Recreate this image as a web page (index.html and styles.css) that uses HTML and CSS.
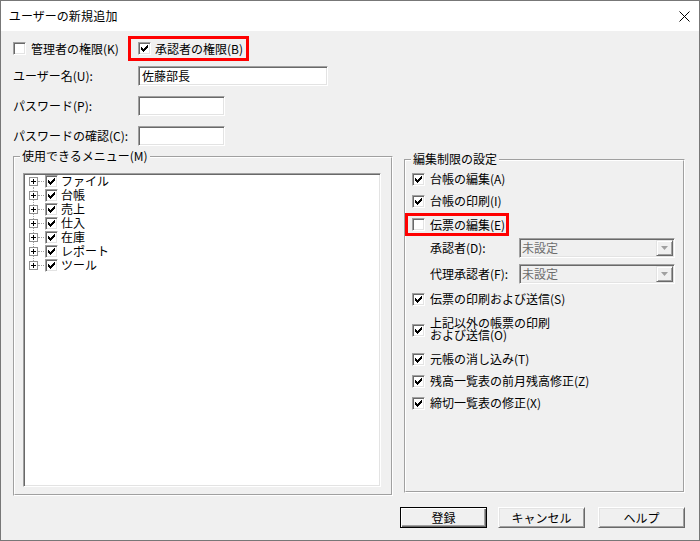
FILE: index.html
```html
<!DOCTYPE html>
<html lang="ja">
<head>
<meta charset="utf-8">
<title>ユーザーの新規追加</title>
<link rel="stylesheet" href="styles.css">
</head>
<body>
<div class="window">
  <div class="titlebar">
    <span class="title">ユーザーの新規追加</span>
    <svg class="close" width="11" height="11" viewBox="0 0 11 11"><path d="M0.5 0.5L10.5 10.5M10.5 0.5L0.5 10.5" stroke="#000" stroke-width="1" fill="none"/></svg>
  </div>
  <div class="client">
    <div class="top-row">
      <div class="chk admin"><span class="cb"></span><span>管理者の権限(K)</span></div>
      <div class="chk hl approver"><span class="cb"><svg class="ck" width="7" height="7" viewBox="0 0 7 7"><path d="M6 0h1v1h-1z M5 1h2v1h-2z M0 2h1v1h-1z M4 2h3v1h-3z M0 3h2v1h-2z M3 3h3v1h-3z M0 4h5v1h-5z M1 5h3v1h-3z M2 6h1v1h-1z"/></svg></span><span>承認者の権限(B)</span></div>
    </div>

    <div class="form">
      <span class="lbl">ユーザー名(U):</span><div class="edit wide">佐藤部長</div>
      <span class="lbl">パスワード(P):</span><div class="edit short"></div>
      <span class="lbl">パスワードの確認(C):</span><div class="edit short"></div>
    </div>

    <div class="groups">
      <div class="group menu-group">
        <div class="gi">
          <div class="listbox">
            <div class="tree-row first"><span class="rail"><svg class="exp" width="9" height="9" viewBox="0 0 9 9"><path d="M2 4h5v1h-5z M4 2h1v5h-1z"/></svg></span><span class="hline"></span><span class="cb tcb"><svg class="ck" width="7" height="7" viewBox="0 0 7 7"><path d="M6 0h1v1h-1z M5 1h2v1h-2z M0 2h1v1h-1z M4 2h3v1h-3z M0 3h2v1h-2z M3 3h3v1h-3z M0 4h5v1h-5z M1 5h3v1h-3z M2 6h1v1h-1z"/></svg></span><span class="ttext">ファイル</span></div>
            <div class="tree-row"><span class="rail"><svg class="exp" width="9" height="9" viewBox="0 0 9 9"><path d="M2 4h5v1h-5z M4 2h1v5h-1z"/></svg></span><span class="hline"></span><span class="cb tcb"><svg class="ck" width="7" height="7" viewBox="0 0 7 7"><path d="M6 0h1v1h-1z M5 1h2v1h-2z M0 2h1v1h-1z M4 2h3v1h-3z M0 3h2v1h-2z M3 3h3v1h-3z M0 4h5v1h-5z M1 5h3v1h-3z M2 6h1v1h-1z"/></svg></span><span class="ttext">台帳</span></div>
            <div class="tree-row"><span class="rail"><svg class="exp" width="9" height="9" viewBox="0 0 9 9"><path d="M2 4h5v1h-5z M4 2h1v5h-1z"/></svg></span><span class="hline"></span><span class="cb tcb"><svg class="ck" width="7" height="7" viewBox="0 0 7 7"><path d="M6 0h1v1h-1z M5 1h2v1h-2z M0 2h1v1h-1z M4 2h3v1h-3z M0 3h2v1h-2z M3 3h3v1h-3z M0 4h5v1h-5z M1 5h3v1h-3z M2 6h1v1h-1z"/></svg></span><span class="ttext">売上</span></div>
            <div class="tree-row"><span class="rail"><svg class="exp" width="9" height="9" viewBox="0 0 9 9"><path d="M2 4h5v1h-5z M4 2h1v5h-1z"/></svg></span><span class="hline"></span><span class="cb tcb"><svg class="ck" width="7" height="7" viewBox="0 0 7 7"><path d="M6 0h1v1h-1z M5 1h2v1h-2z M0 2h1v1h-1z M4 2h3v1h-3z M0 3h2v1h-2z M3 3h3v1h-3z M0 4h5v1h-5z M1 5h3v1h-3z M2 6h1v1h-1z"/></svg></span><span class="ttext">仕入</span></div>
            <div class="tree-row"><span class="rail"><svg class="exp" width="9" height="9" viewBox="0 0 9 9"><path d="M2 4h5v1h-5z M4 2h1v5h-1z"/></svg></span><span class="hline"></span><span class="cb tcb"><svg class="ck" width="7" height="7" viewBox="0 0 7 7"><path d="M6 0h1v1h-1z M5 1h2v1h-2z M0 2h1v1h-1z M4 2h3v1h-3z M0 3h2v1h-2z M3 3h3v1h-3z M0 4h5v1h-5z M1 5h3v1h-3z M2 6h1v1h-1z"/></svg></span><span class="ttext">在庫</span></div>
            <div class="tree-row"><span class="rail"><svg class="exp" width="9" height="9" viewBox="0 0 9 9"><path d="M2 4h5v1h-5z M4 2h1v5h-1z"/></svg></span><span class="hline"></span><span class="cb tcb"><svg class="ck" width="7" height="7" viewBox="0 0 7 7"><path d="M6 0h1v1h-1z M5 1h2v1h-2z M0 2h1v1h-1z M4 2h3v1h-3z M0 3h2v1h-2z M3 3h3v1h-3z M0 4h5v1h-5z M1 5h3v1h-3z M2 6h1v1h-1z"/></svg></span><span class="ttext">レポート</span></div>
            <div class="tree-row last"><span class="rail"><svg class="exp" width="9" height="9" viewBox="0 0 9 9"><path d="M2 4h5v1h-5z M4 2h1v5h-1z"/></svg></span><span class="hline"></span><span class="cb tcb"><svg class="ck" width="7" height="7" viewBox="0 0 7 7"><path d="M6 0h1v1h-1z M5 1h2v1h-2z M0 2h1v1h-1z M4 2h3v1h-3z M0 3h2v1h-2z M3 3h3v1h-3z M0 4h5v1h-5z M1 5h3v1h-3z M2 6h1v1h-1z"/></svg></span><span class="ttext">ツール</span></div>
          </div>
        </div>
        <span class="caption">使用できるメニュー(M)</span>
      </div>

      <div class="group edit-group">
        <div class="gi">
          <div class="erow"><span class="cb"><svg class="ck" width="7" height="7" viewBox="0 0 7 7"><path d="M6 0h1v1h-1z M5 1h2v1h-2z M0 2h1v1h-1z M4 2h3v1h-3z M0 3h2v1h-2z M3 3h3v1h-3z M0 4h5v1h-5z M1 5h3v1h-3z M2 6h1v1h-1z"/></svg></span><span>台帳の編集(A)</span></div>
          <div class="erow"><span class="cb"><svg class="ck" width="7" height="7" viewBox="0 0 7 7"><path d="M6 0h1v1h-1z M5 1h2v1h-2z M0 2h1v1h-1z M4 2h3v1h-3z M0 3h2v1h-2z M3 3h3v1h-3z M0 4h5v1h-5z M1 5h3v1h-3z M2 6h1v1h-1z"/></svg></span><span>台帳の印刷(I)</span></div>
          <div class="erow hl2"><span class="cb"></span><span>伝票の編集(E)</span></div>
          <div class="crow first-combo"><span class="clbl">承認者(D):</span><div class="combo"><span class="ctext">未設定</span><span class="dd"><svg width="7" height="4" viewBox="0 0 7 4"><path d="M0 0h7l-3.5 4z" fill="#a0a0a0"/></svg></span></div></div>
          <div class="crow second-combo"><span class="clbl">代理承認者(F):</span><div class="combo"><span class="ctext">未設定</span><span class="dd"><svg width="7" height="4" viewBox="0 0 7 4"><path d="M0 0h7l-3.5 4z" fill="#a0a0a0"/></svg></span></div></div>
          <div class="erow after-combo"><span class="cb"><svg class="ck" width="7" height="7" viewBox="0 0 7 7"><path d="M6 0h1v1h-1z M5 1h2v1h-2z M0 2h1v1h-1z M4 2h3v1h-3z M0 3h2v1h-2z M3 3h3v1h-3z M0 4h5v1h-5z M1 5h3v1h-3z M2 6h1v1h-1z"/></svg></span><span>伝票の印刷および送信(S)</span></div>
          <div class="erow tall"><span class="cb low"><svg class="ck" width="7" height="7" viewBox="0 0 7 7"><path d="M6 0h1v1h-1z M5 1h2v1h-2z M0 2h1v1h-1z M4 2h3v1h-3z M0 3h2v1h-2z M3 3h3v1h-3z M0 4h5v1h-5z M1 5h3v1h-3z M2 6h1v1h-1z"/></svg></span><span class="two"><span class="ln">上記以外の帳票の印刷</span><span class="ln">および送信(O)</span></span></div>
          <div class="erow"><span class="cb"><svg class="ck" width="7" height="7" viewBox="0 0 7 7"><path d="M6 0h1v1h-1z M5 1h2v1h-2z M0 2h1v1h-1z M4 2h3v1h-3z M0 3h2v1h-2z M3 3h3v1h-3z M0 4h5v1h-5z M1 5h3v1h-3z M2 6h1v1h-1z"/></svg></span><span>元帳の消し込み(T)</span></div>
          <div class="erow"><span class="cb"><svg class="ck" width="7" height="7" viewBox="0 0 7 7"><path d="M6 0h1v1h-1z M5 1h2v1h-2z M0 2h1v1h-1z M4 2h3v1h-3z M0 3h2v1h-2z M3 3h3v1h-3z M0 4h5v1h-5z M1 5h3v1h-3z M2 6h1v1h-1z"/></svg></span><span>残高一覧表の前月残高修正(Z)</span></div>
          <div class="erow"><span class="cb"><svg class="ck" width="7" height="7" viewBox="0 0 7 7"><path d="M6 0h1v1h-1z M5 1h2v1h-2z M0 2h1v1h-1z M4 2h3v1h-3z M0 3h2v1h-2z M3 3h3v1h-3z M0 4h5v1h-5z M1 5h3v1h-3z M2 6h1v1h-1z"/></svg></span><span>締切一覧表の修正(X)</span></div>
        </div>
        <span class="caption">編集制限の設定</span>
      </div>
    </div>

    <div class="buttons">
      <button class="btn default">登録</button>
      <button class="btn cancel">キャンセル</button>
      <button class="btn">ヘルプ</button>
    </div>
  </div>
</div>
</body>
</html>
```

FILE: styles.css
```css
* { box-sizing: border-box; }
html, body { margin: 0; padding: 0; background: #fff; }
body {
  font-family: "Noto Sans CJK JP", "Noto Sans", sans-serif;
  font-size: 12px;
  line-height: 14px;
  color: #000;
}

.window {
  width: 700px;
  height: 541px;
  border: 1px solid #777;
  background: #f0f0f0;
  display: flex;
  flex-direction: column;
}

.titlebar {
  height: 30px;
  flex: none;
  background: #fff;
  display: flex;
  align-items: center;
  justify-content: space-between;
  padding: 0 9px 0 8px;
}
.title { font-feature-settings: "palt"; letter-spacing: 0.3px; }
.close { display: block; }

.client {
  flex: 1;
  display: flex;
  flex-direction: column;
  padding: 5px 14px 0 12px;
}

/* checkboxes */
.cb {
  width: 13px;
  height: 13px;
  flex: none;
  background: #fff;
  border: 1px solid;
  border-color: #a0a0a0 #fff #fff #a0a0a0;
  box-shadow: inset 1px 1px 0 #696969, inset -1px -1px 0 #e3e3e3;
  display: inline-flex;
  align-items: center;
  justify-content: center;
}
.ck { display: block; fill: #000; shape-rendering: crispEdges; }

.top-row {
  display: flex;
  align-items: center;
  height: 25px;
}
.chk { display: flex; align-items: center; }
.admin { width: 115px; gap: 5px; }
.hl {
  width: 121px;
  height: 25px;
  border: 3px solid #ff0000;
  padding-left: 7px;
  gap: 4px;
}

/* form */
.form {
  margin-top: 5px;
  display: grid;
  grid-template-columns: 125px auto;
  grid-auto-rows: 20px;
  row-gap: 10px;
  align-items: center;
}
.lbl { white-space: nowrap; }
.edit {
  height: 20px;
  background: #fff;
  border: 1px solid;
  border-color: #a0a0a0 #fff #fff #a0a0a0;
  box-shadow: inset 1px 1px 0 #696969, inset -1px -1px 0 #e3e3e3;
  padding: 2px 3px 0 3px;
  justify-self: start;
  line-height: 14px;
}
.edit.wide { width: 190px; }
.edit.short { width: 87px; }

/* group boxes */
.groups {
  margin-top: 10px;
  display: flex;
  align-items: flex-start;
}
.group {
  position: relative;
  border: 1px solid;
  border-color: #a0a0a0 #fff #fff #a0a0a0;
}
.gi {
  height: 100%;
  border: 1px solid;
  border-color: #fff #a0a0a0 #a0a0a0 #fff;
}
.caption {
  position: absolute;
  left: 6px;
  top: -8px;
  padding: 0 2px;
  background: #f0f0f0;
  line-height: 14px;
  white-space: nowrap;
}
.menu-group { width: 380px; height: 340px; }
.menu-group .gi { padding: 15px 10px 7px 8px; }
.edit-group { width: 281px; height: 334px; margin-left: 11px; margin-top: 3px; }
.edit-group .gi {
  padding: 7px 0 0 6px;
  display: flex;
  flex-direction: column;
}

/* tree list */
.listbox {
  height: 100%;
  background: #fff;
  border: 1px solid;
  border-color: #a0a0a0 #fff #fff #a0a0a0;
  box-shadow: inset 1px 1px 0 #696969, inset -1px -1px 0 #e3e3e3;
  padding: 0 0 0 5px;
}
.tree-row {
  height: 14px;
  display: flex;
  align-items: center;
}
.rail {
  width: 9px;
  height: 14px;
  flex: none;
  display: flex;
  align-items: center;
  background-image: repeating-linear-gradient(to bottom, #a0a0a0 0 1px, transparent 1px 2px);
  background-repeat: no-repeat;
  background-size: 1px 14px;
  background-position: 4px 0;
}
.tree-row.first .rail { background-size: 1px 7px; background-position: 4px 7px; }
.tree-row.last .rail { background-size: 1px 7px; background-position: 4px 0; }
.exp {
  display: block;
  background: #fff;
  outline: 1px solid #919191;
  outline-offset: -1px;
  fill: #000;
  shape-rendering: crispEdges;
}
.hline {
  width: 6px;
  height: 1px;
  margin-right: 1px;
  flex: none;
  border-top: 1px dotted #a0a0a0;
}
.ttext { margin-left: 3px; white-space: nowrap; }

/* edit rights rows */
.erow {
  height: 22px;
  display: flex;
  align-items: center;
  gap: 5px;
  white-space: nowrap;
}
.erow.hl2 {
  margin-top: 1px;
  height: 23px;
  width: 104px;
  margin-left: -7px;
  padding-left: 4px;
  border: 3px solid #ff0000;
}
.crow {
  height: 20px;
  display: flex;
  align-items: center;
  padding-left: 18px;
}
.first-combo { margin-top: 2px; }
.second-combo { margin-top: 6px; }
.after-combo { margin-top: 4px; }
.clbl { width: 89px; flex: none; white-space: nowrap; }
.combo {
  width: 156px;
  height: 20px;
  background: #f0f0f0;
  border: 1px solid;
  border-color: #a0a0a0 #fff #fff #a0a0a0;
  box-shadow: inset 1px 1px 0 #696969, inset -1px -1px 0 #e3e3e3;
  padding: 1px;
  display: flex;
  align-items: stretch;
}
.ctext {
  flex: 1;
  color: #6d6d6d;
  padding-left: 1px;
  line-height: 16px;
}
.dd {
  width: 17px;
  flex: none;
  background: #f0f0f0;
  border: 1px solid;
  border-color: #e3e3e3 #696969 #696969 #e3e3e3;
  box-shadow: inset 1px 1px 0 #fff, inset -1px -1px 0 #a0a0a0;
  display: flex;
  align-items: center;
  justify-content: center;
}
.dd svg { display: block; }
.erow.tall { height: 38px; }
.cb.low { margin-top: 3px; }
.two { display: flex; flex-direction: column; }
.ln { display: block; height: 12px; line-height: 12px; }

/* buttons */
.buttons {
  margin-top: 11px;
  display: flex;
  justify-content: flex-end;
}
.btn {
  width: 87px;
  height: 21px;
  font: inherit;
  line-height: 14px;
  color: #000;
  padding: 0;
  background: #f0f0f0;
  border: 1px solid;
  border-color: #fff #696969 #696969 #fff;
  box-shadow: inset 1px 1px 0 #e3e3e3, inset -1px -1px 0 #a0a0a0;
}
.btn.default {
  border: 1px solid #000;
  box-shadow: inset 1px 1px 0 #fff, inset -1px -1px 0 #696969, inset -2px -2px 0 #a0a0a0;
  margin-right: 11px;
}
.btn.cancel { margin-right: 13px; }
```
